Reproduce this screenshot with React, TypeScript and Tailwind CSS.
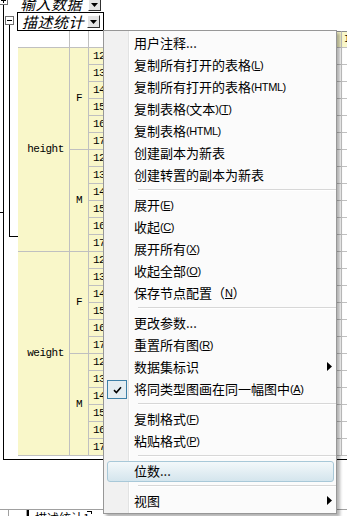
import React from "react";

type Seg = { t: string; latin?: boolean; u?: boolean };
type MenuEntry =
  | { kind: "item"; segs: Seg[]; arrow?: boolean; checked?: boolean; hl?: boolean }
  | { kind: "sep" };

const mk = (cn: string, key: string): Seg[] => [
  { t: cn },
  { t: "(", latin: true },
  { t: key, latin: true, u: true },
  { t: ")", latin: true },
];

const items: MenuEntry[] = [
  { kind: "item", segs: [{ t: "用户注释..." }] },
  { kind: "item", segs: mk("复制所有打开的表格", "L") },
  { kind: "item", segs: [{ t: "复制所有打开的表格" }, { t: "(HTML)", latin: true }] },
  {
    kind: "item",
    segs: [
      { t: "复制表格" },
      { t: "(", latin: true },
      { t: "文本" },
      { t: ")(", latin: true },
      { t: "T", latin: true, u: true },
      { t: ")", latin: true },
    ],
  },
  { kind: "item", segs: [{ t: "复制表格" }, { t: "(HTML)", latin: true }] },
  { kind: "item", segs: [{ t: "创建副本为新表" }] },
  { kind: "item", segs: [{ t: "创建转置的副本为新表" }] },
  { kind: "sep" },
  { kind: "item", segs: mk("展开", "E") },
  { kind: "item", segs: mk("收起", "C") },
  { kind: "item", segs: mk("展开所有", "X") },
  { kind: "item", segs: mk("收起全部", "O") },
  {
    kind: "item",
    segs: [{ t: "保存节点配置（" }, { t: "N", latin: true, u: true }, { t: "）" }],
  },
  { kind: "sep" },
  { kind: "item", segs: [{ t: "更改参数..." }] },
  { kind: "item", segs: mk("重置所有图", "R") },
  { kind: "item", segs: [{ t: "数据集标识" }], arrow: true },
  { kind: "item", segs: mk("将同类型图画在同一幅图中", "A"), checked: true },
  { kind: "sep" },
  { kind: "item", segs: mk("复制格式", "F") },
  { kind: "item", segs: mk("粘贴格式", "P") },
  { kind: "sep" },
  { kind: "item", segs: [{ t: "位数..." }], hl: true },
  { kind: "sep" },
  { kind: "item", segs: [{ t: "视图" }], arrow: true },
];

function DropBtn() {
  return (
    <div className="w-[13px] h-[13px] shrink-0 bg-[#e4e4e4] border-t border-l border-t-[#ffffff] border-l-[#ffffff] border-r border-b border-r-[#303030] border-b-[#303030] flex items-center justify-center">
      <svg width="7" height="4" viewBox="0 0 7 4">
        <polygon points="0,0 7,0 3.5,4" fill="#000" />
      </svg>
    </div>
  );
}

function ExpandBox({ plus }: { plus: boolean }) {
  return (
    <div className="w-[9px] h-[9px] shrink-0 border border-[#6f6f6f] bg-white flex items-center justify-center">
      <svg width="7" height="7" viewBox="0 0 7 7">
        <rect x="1" y="3" width="5" height="1" fill="#000" />
        {plus && <rect x="3" y="1" width="1" height="5" fill="#000" />}
      </svg>
    </div>
  );
}

function Menu() {
  return (
    <div className="absolute left-[103px] top-[30px] w-[234px] border border-[#979797] pt-[1px] pb-[1px] shadow-[3px_3px_3px_rgba(0,0,0,0.3)] bg-[linear-gradient(to_right,#f1f1f1_0px,#f1f1f1_24px,#e2e3e3_24px,#e2e3e3_25px,#ffffff_25px,#ffffff_26px,#fbfbfb_26px)] font-['Noto_Sans_CJK_SC',sans-serif] text-[13px] text-black">
      {items.map((it, i) => {
        if (it.kind === "sep") {
          return (
            <div key={i} className="h-[8px] flex flex-col justify-center pl-[34px]">
              <div className="h-px bg-[#d7d7d7]" />
              <div className="h-px bg-white" />
            </div>
          );
        }
        return (
          <div key={i} className="relative h-[22px] flex items-center">
            {it.hl && (
              <div className="absolute left-[3px] right-[2px] top-[1px] bottom-0 rounded-[3px] border border-[#a8c8d8] bg-[linear-gradient(to_bottom,#f3f8fa,#d4e5ed)]" />
            )}
            {it.checked && (
              <div className="absolute left-[3px] top-[2px] w-[20px] h-[19px] border border-[#3e80a8] bg-[#e4edf2] flex items-center justify-center">
                <svg width="9" height="8" viewBox="0 0 9 8">
                  <path d="M1 4.2 L3.4 6.5 L8 1.3" stroke="#000" strokeWidth="1.6" fill="none" />
                </svg>
              </div>
            )}
            <div className="relative pl-[30px] flex items-center leading-[22px] whitespace-nowrap">
              {it.segs.map((s, j) =>
                s.latin ? (
                  <span
                    key={j}
                    className={
                      s.u
                        ? "font-['Liberation_Sans',sans-serif] text-[11px] tracking-[-0.4px] underline decoration-1 underline-offset-[1px]"
                        : "font-['Liberation_Sans',sans-serif] text-[11px] tracking-[-0.4px]"
                    }
                  >
                    {s.t}
                  </span>
                ) : (
                  <span key={j}>{s.t}</span>
                )
              )}
            </div>
            {it.arrow && (
              <div className="absolute right-[4px] top-[6px]">
                <svg width="5" height="9" viewBox="0 0 5 9">
                  <polygon points="0,0 5,4.5 0,9" fill="#000" />
                </svg>
              </div>
            )}
          </div>
        );
      })}
    </div>
  );
}

const ages = ["12", "13", "14", "15", "16", "17"];

function Table() {
  const cells: React.ReactNode[] = [];
  // header row
  cells.push(<div key="h1" className="bg-white border-r border-b border-[#c0c0c0]" />);
  cells.push(<div key="h2" className="bg-white border-r border-b border-[#c0c0c0]" />);
  cells.push(<div key="h3" className="bg-white border-r border-b border-[#c0c0c0]" />);
  cells.push(
    <div key="h4" className="bg-[#f9f7c9] border-r border-b border-[#c0c0c0] border-t border-t-[#8a8a8a]" />
  );
  cells.push(
    <div key="h5" className="bg-[#f9f7c9] border-r border-b border-[#c0c0c0] border-t border-t-[#8a8a8a] pl-[2px] flex items-center">
      I
    </div>
  );
  ["height", "weight"].forEach((v) => {
    ["F", "M"].forEach((g, gi) => {
      ages.forEach((a, ai) => {
        if (gi === 0 && ai === 0) {
          cells.push(
            <div
              key={v}
              className="row-span-12 bg-[#f9f7c9] border-r border-b border-[#c0c0c0] flex items-center justify-center pl-[4px]"
            >
              {v}
            </div>
          );
        }
        if (ai === 0) {
          cells.push(
            <div
              key={v + g}
              className="row-span-6 bg-[#f9f7c9] border-r border-b border-[#c0c0c0] flex items-center justify-center"
            >
              {g}
            </div>
          );
        }
        cells.push(
          <div
            key={v + g + a}
            className="bg-[#f9f7c9] border-r border-b border-[#c0c0c0] flex items-center pl-[4px]"
          >
            {a}
          </div>
        );
        cells.push(<div key={v + g + a + "d1"} className="bg-white border-r border-b border-[#c0c0c0]" />);
        cells.push(<div key={v + g + a + "d2"} className="bg-white border-r border-b border-[#c0c0c0]" />);
      });
    });
  });
  return (
    <div className="shrink-0 grid grid-cols-[52px_19px_42px_211px_70px] grid-rows-[repeat(25,17px)] font-['Liberation_Mono',monospace] text-[11px] tracking-[-0.5px] text-black">
      {cells}
    </div>
  );
}

export default function App() {
  return (
    <div className="relative w-[347px] h-[516px] overflow-hidden bg-white flex flex-col">
      {/* first tree node (cut off at top) */}
      <div className="flex h-[12px] shrink-0">
        <div className="-ml-[1px] flex flex-col w-[9px] shrink-0">
          <div className="-mt-[4px]">
            <ExpandBox plus />
          </div>
          <div className="ml-[4px] w-px flex-1 bg-black" />
        </div>
        <div className="ml-[12px] w-[68px] -mt-[5px] h-[17px] italic text-[15px] leading-[17px] tracking-[0.5px] font-['Noto_Sans_CJK_SC',sans-serif] text-black whitespace-nowrap">
          输入数据
        </div>
        <div className="-mt-[2px]">
          <DropBtn />
        </div>
      </div>

      {/* second tree node and its table */}
      <div className="flex shrink-0">
        <div className="w-[3px] shrink-0 pt-[200px]">
          <div className="h-px bg-black" />
        </div>
        <div className="w-[400px] h-[448px] shrink-0 border-l border-b border-black flex">
          <div className="w-[14px] shrink-0 flex flex-col">
            <div className="ml-[1px] mt-[4px]">
              <ExpandBox plus={false} />
            </div>
            <div className="ml-[5px] w-[9px] h-[212px] border-l border-b border-black" />
          </div>
          <div className="flex flex-col shrink-0">
            <div className="-ml-[1px] w-[87px] h-[19px] border border-black flex items-center bg-white">
              <div className="pl-[4px] w-[69px] italic text-[15px] leading-[17px] tracking-[0.5px] font-['Noto_Sans_CJK_SC',sans-serif] text-black whitespace-nowrap">
                描述统计
              </div>
              <DropBtn />
            </div>
            <Table />
          </div>
        </div>
      </div>

      {/* sheet tab strip at the bottom */}
      <div className="mt-auto h-[7px] shrink-0 flex items-start border-t border-[#a0a0a0] overflow-hidden">
        <div className="w-[9px] h-[7px] border-r border-[#a0a0a0]" />
        <div className="w-[18px] h-[7px] border-r border-[#a0a0a0]" />
        <div className="w-[52px] h-[7px] border-l-2 border-black pl-[6px] font-['Noto_Sans_CJK_SC',sans-serif] text-[12px] leading-[16px] text-black whitespace-nowrap">
          描述统计1
        </div>
        <div className="ml-[8px] w-[5px] h-[3px] mt-[1px] border-t border-r border-black" />
      </div>

      <Menu />
    </div>
  );
}
